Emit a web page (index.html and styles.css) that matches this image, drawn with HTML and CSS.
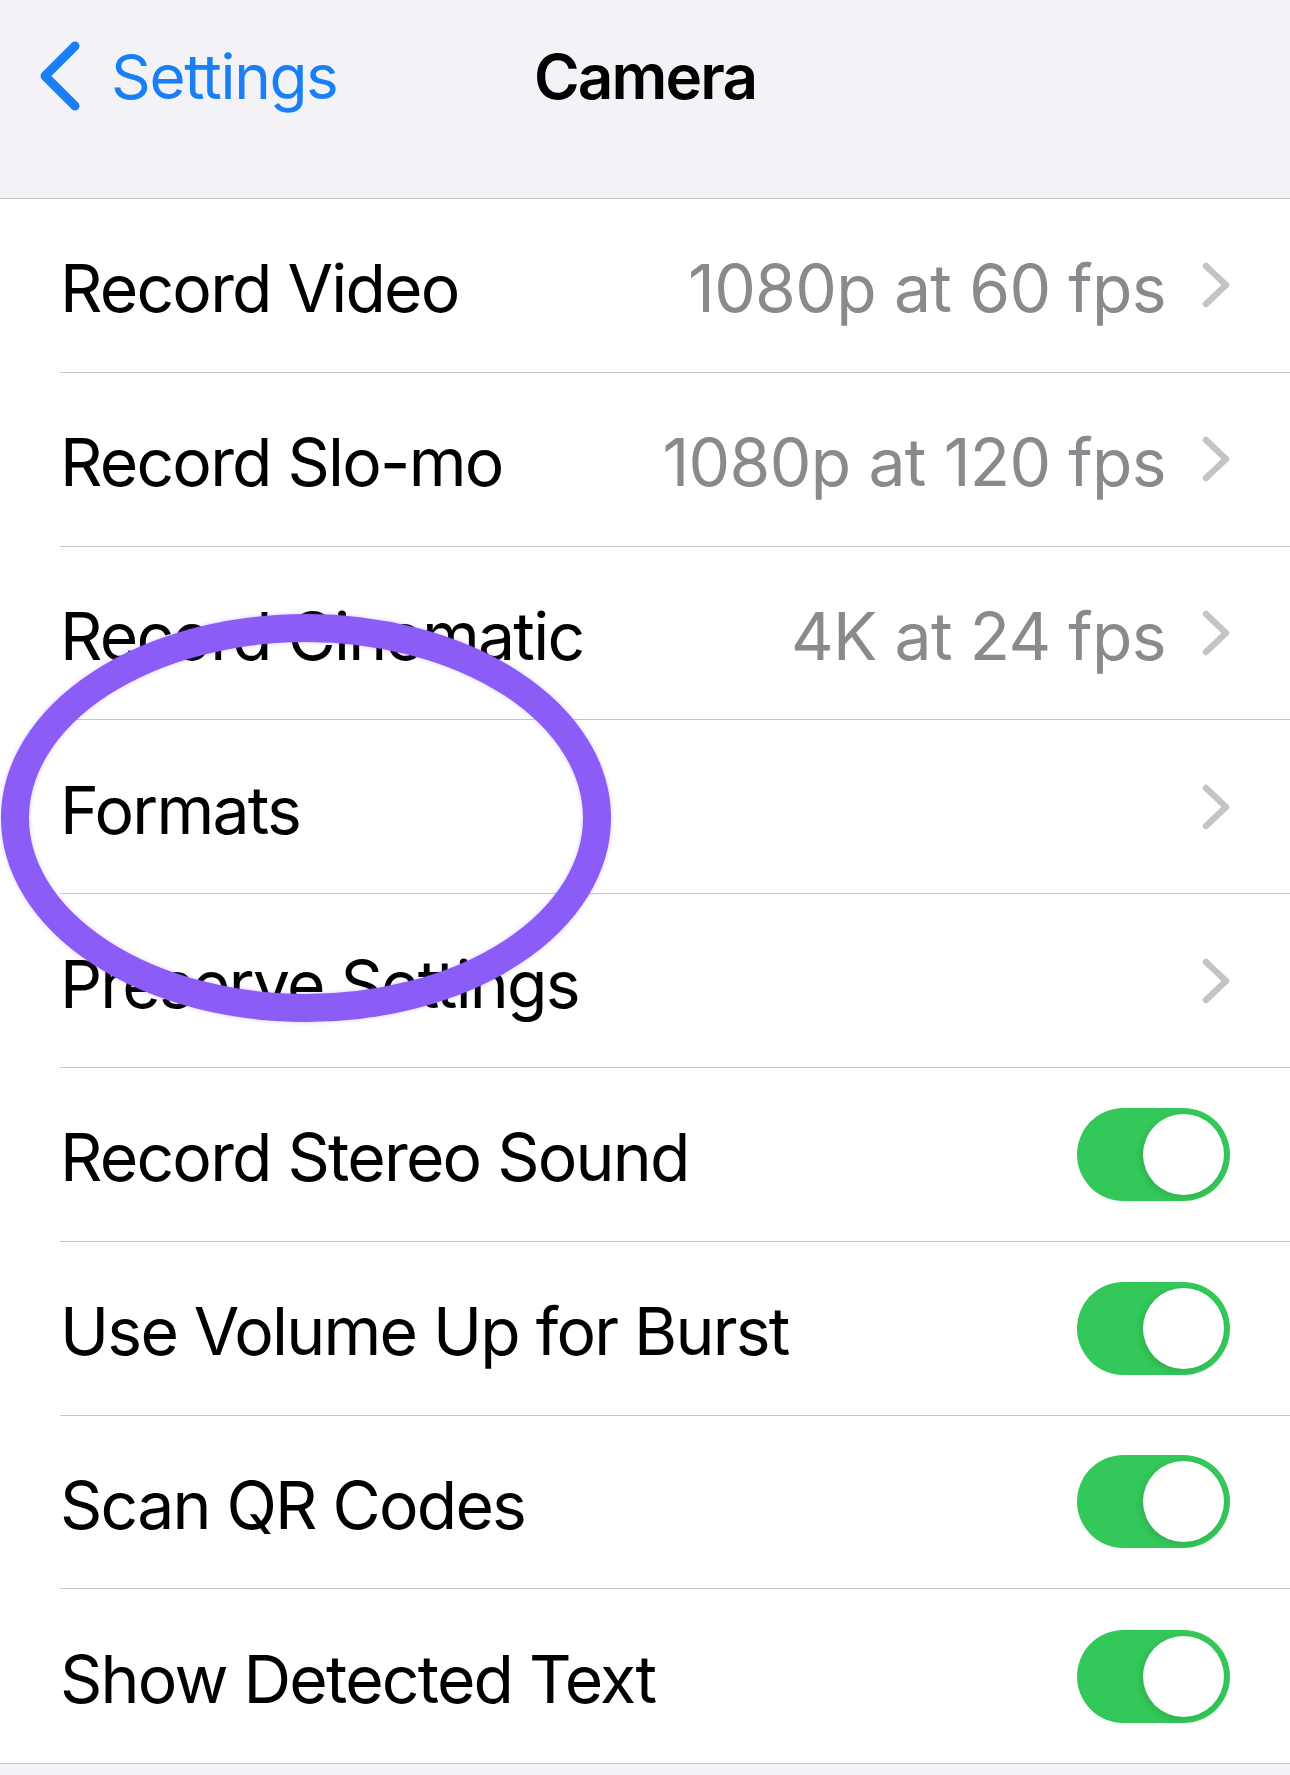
FILE: index.html
```html
<!DOCTYPE html>
<html>
<head>
<meta charset="utf-8">
<link rel="stylesheet" href="styles.css">
</head>
<body>
<div class="page">
  <header class="nav">
    <div class="nav-bar">
      <a class="back">
        <svg class="back-chev" viewBox="0 0 46 72" width="46" height="72"><path d="M38 6 L8 36 L38 66" fill="none" stroke="#1a7ff5" stroke-width="9" stroke-linecap="round" stroke-linejoin="round"/></svg>
        <span class="back-label">Settings</span>
      </a>
      <h1 class="title">Camera</h1>
      <div class="spacer"></div>
    </div>
  </header>
  <main class="list">
    <div class="row"><div class="row-inner"><span class="label">Record Video</span><span class="value">1080p at 60 fps</span><svg class="chev" viewBox="0 0 28 46" width="28" height="46"><path d="M4 4 L24 23 L4 42" fill="none" stroke="#c4c4c7" stroke-width="6.5" stroke-linecap="round" stroke-linejoin="round"/></svg></div></div>
    <div class="row"><div class="row-inner"><span class="label">Record Slo-mo</span><span class="value">1080p at 120 fps</span><svg class="chev" viewBox="0 0 28 46" width="28" height="46"><path d="M4 4 L24 23 L4 42" fill="none" stroke="#c4c4c7" stroke-width="6.5" stroke-linecap="round" stroke-linejoin="round"/></svg></div></div>
    <div class="row"><div class="row-inner"><span class="label">Record Cinematic</span><span class="value">4K at 24 fps</span><svg class="chev" viewBox="0 0 28 46" width="28" height="46"><path d="M4 4 L24 23 L4 42" fill="none" stroke="#c4c4c7" stroke-width="6.5" stroke-linecap="round" stroke-linejoin="round"/></svg></div></div>
    <div class="row"><div class="row-inner"><span class="label">Formats</span><span class="value"></span><svg class="chev" viewBox="0 0 28 46" width="28" height="46"><path d="M4 4 L24 23 L4 42" fill="none" stroke="#c4c4c7" stroke-width="6.5" stroke-linecap="round" stroke-linejoin="round"/></svg></div></div>
    <div class="row"><div class="row-inner"><span class="label">Preserve Settings</span><span class="value"></span><svg class="chev" viewBox="0 0 28 46" width="28" height="46"><path d="M4 4 L24 23 L4 42" fill="none" stroke="#c4c4c7" stroke-width="6.5" stroke-linecap="round" stroke-linejoin="round"/></svg></div></div>
    <div class="row"><div class="row-inner"><span class="label">Record Stereo Sound</span><span class="toggle"><span class="knob"></span></span></div></div>
    <div class="row"><div class="row-inner"><span class="label">Use Volume Up for Burst</span><span class="toggle"><span class="knob"></span></span></div></div>
    <div class="row"><div class="row-inner"><span class="label">Scan QR Codes</span><span class="toggle"><span class="knob"></span></span></div></div>
    <div class="row last"><div class="row-inner"><span class="label">Show Detected Text</span><span class="toggle"><span class="knob"></span></span></div></div>
  </main>
  <svg class="circle" viewBox="0 0 612 408" width="612" height="408"><ellipse cx="306" cy="204" rx="291" ry="190" fill="none" stroke="#8b5cf6" stroke-width="28"/></svg>
</div>
</body>
</html>
```
FILE: styles.css
```css
html, body {
  margin: 0;
  padding: 0;
  background: #f2f2f7;
}
.page {
  position: relative;
  width: 1290px;
  height: 1775px;
  overflow: hidden;
  font-family: "Inter", "Roboto", "Liberation Sans", sans-serif;
}
.nav {
  height: 198px;
  background: #f2f2f7;
  border-bottom: 1px solid #c6c6c8;
}
.nav-bar {
  height: 152px;
  display: grid;
  grid-template-columns: 1fr auto 1fr;
  align-items: center;
}
.back {
  display: flex;
  align-items: center;
  padding-left: 37px;
  color: #1a7ff5;
}
.back-chev {
  display: block;
}
.back-label {
  margin-left: 28px;
  font-size: 62px;
  letter-spacing: -0.022em;
}
.title {
  margin: 0;
  font-size: 62px;
  font-weight: 600;
  color: #000;
  letter-spacing: -0.03em;
}
.list {
  background: #fff;
  border-bottom: 1px solid #c6c6c8;
}
.row {
  height: 173.8px;
  padding-left: 60px;
  display: flex;
  box-sizing: border-box;
}
.row-inner {
  flex: 1;
  display: flex;
  align-items: center;
  padding-right: 60px;
  padding-top: 6px;
  border-bottom: 1px solid #c6c6c8;
}
.row.last .row-inner {
  border-bottom: none;
}
.label {
  flex: 1;
  font-size: 66px;
  letter-spacing: -0.027em;
  color: #000;
  white-space: nowrap;
}
.value {
  font-size: 66px;
  letter-spacing: -0.01em;
  color: #8a8a8e;
  margin-right: 36px;
  white-space: nowrap;
}
.chev {
  display: block;
  margin-top: -6px;
}
.toggle {
  position: relative;
  width: 153px;
  height: 93px;
  border-radius: 47px;
  background: #34c759;
  margin-top: -6px;
  flex: none;
}
.knob {
  position: absolute;
  right: 6px;
  top: 6px;
  width: 81px;
  height: 81px;
  border-radius: 50%;
  background: #fff;
  box-shadow: -2px 2px 6px rgba(0,0,0,0.12);
}
.circle {
  position: absolute;
  left: 0;
  top: 614px;
  filter: drop-shadow(0 0 2px rgba(139,92,246,0.35));
}
```
